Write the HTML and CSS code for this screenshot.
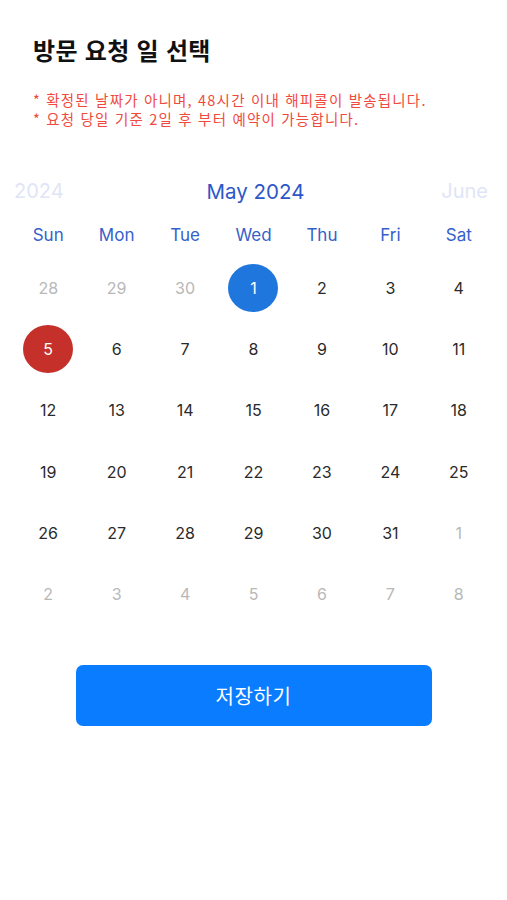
FILE: index.html
```html
<!DOCTYPE html>
<html lang="ko">
<head>
<meta charset="utf-8">
<link rel="stylesheet" href="styles.css">
</head>
<body>
<div class="page">
  <h1 class="title">방문 요청 일 선택</h1>
  <div class="notes">
    <p>* 확정된 날짜가 아니며, 48시간 이내 해피콜이 발송됩니다.</p>
    <p>* 요청 당일 기준 2일 후 부터 예약이 가능합니다.</p>
  </div>
  <div class="calendar">
    <div class="cal-header">
      <span class="side">2024</span>
      <span class="month">May 2024</span>
      <span class="side">June</span>
    </div>
    <div class="weekdays">
      <span>Sun</span><span>Mon</span><span>Tue</span><span>Wed</span><span>Thu</span><span>Fri</span><span>Sat</span>
    </div>
    <div class="days">
      <span class="day other">28</span><span class="day other">29</span><span class="day other">30</span><span class="day"><b class="sel">1</b></span><span class="day">2</span><span class="day">3</span><span class="day">4</span>
      <span class="day"><b class="today">5</b></span><span class="day">6</span><span class="day">7</span><span class="day">8</span><span class="day">9</span><span class="day">10</span><span class="day">11</span>
      <span class="day">12</span><span class="day">13</span><span class="day">14</span><span class="day">15</span><span class="day">16</span><span class="day">17</span><span class="day">18</span>
      <span class="day">19</span><span class="day">20</span><span class="day">21</span><span class="day">22</span><span class="day">23</span><span class="day">24</span><span class="day">25</span>
      <span class="day">26</span><span class="day">27</span><span class="day">28</span><span class="day">29</span><span class="day">30</span><span class="day">31</span><span class="day other">1</span>
      <span class="day other">2</span><span class="day other">3</span><span class="day other">4</span><span class="day other">5</span><span class="day other">6</span><span class="day other">7</span><span class="day other">8</span>
    </div>
  </div>
  <div class="actions">
    <button class="save">저장하기</button>
  </div>
</div>
</body>
</html>
```
FILE: styles.css
```css
html, body {
  margin: 0;
  padding: 0;
  background: #ffffff;
}
body {
  font-family: "Inter", "Noto Sans CJK KR", sans-serif;
  color: #222222;
}
.page {
  width: 507px;
  padding-top: 35px;
}
.title {
  margin: 0 0 0 33px;
  font-family: "Noto Sans CJK KR", sans-serif;
  font-size: 24px;
  line-height: 30px;
  font-weight: 700;
  color: #111111;
  letter-spacing: 0.3px;
}
.notes {
  margin: 25px 0 0 33px;
  font-family: "Noto Sans CJK KR", sans-serif;
  font-size: 14.5px;
  line-height: 19px;
  letter-spacing: 1.2px;
  color: #f04a3e;
}
.notes p {
  margin: 0;
  white-space: nowrap;
}
.calendar {
  margin: 43px 14px 0 14px;
}
.cal-header {
  display: flex;
  justify-content: space-between;
  align-items: center;
  height: 40px;
  padding: 0 5px 0 0;
}
.cal-header .side {
  font-size: 20px;
  color: #dfe5f7;
}
.cal-header .month {
  font-size: 20.5px;
  color: #2d57c9;
  margin-left: 6px;
}
.weekdays {
  display: grid;
  grid-template-columns: repeat(7, 1fr);
  height: 44px;
  align-items: center;
  margin-top: 2px;
}
.weekdays span {
  text-align: center;
  font-size: 17px;
  color: #3661c9;
}
.days {
  display: grid;
  grid-template-columns: repeat(7, 1fr);
  grid-auto-rows: 61.3px;
}
.day {
  display: flex;
  align-items: center;
  justify-content: center;
  font-size: 16px;
  color: #2a2a2a;
}
.day.other {
  color: #b8b8b8;
}
.day b {
  display: flex;
  align-items: center;
  justify-content: center;
  width: 50px;
  height: 48px;
  border-radius: 50%;
  font-weight: 400;
  color: #ffffff;
}
.sel {
  background: #1f76dc;
}
.today {
  background: #c5302a;
}
.actions {
  display: flex;
  justify-content: center;
  margin-top: 40px;
}
.save {
  width: 356px;
  height: 61px;
  border: none;
  border-radius: 7px;
  background: #0a7cff;
  color: #ffffff;
  font-family: "Noto Sans CJK KR", sans-serif;
  font-size: 20px;
  letter-spacing: 0.6px;
}
```
